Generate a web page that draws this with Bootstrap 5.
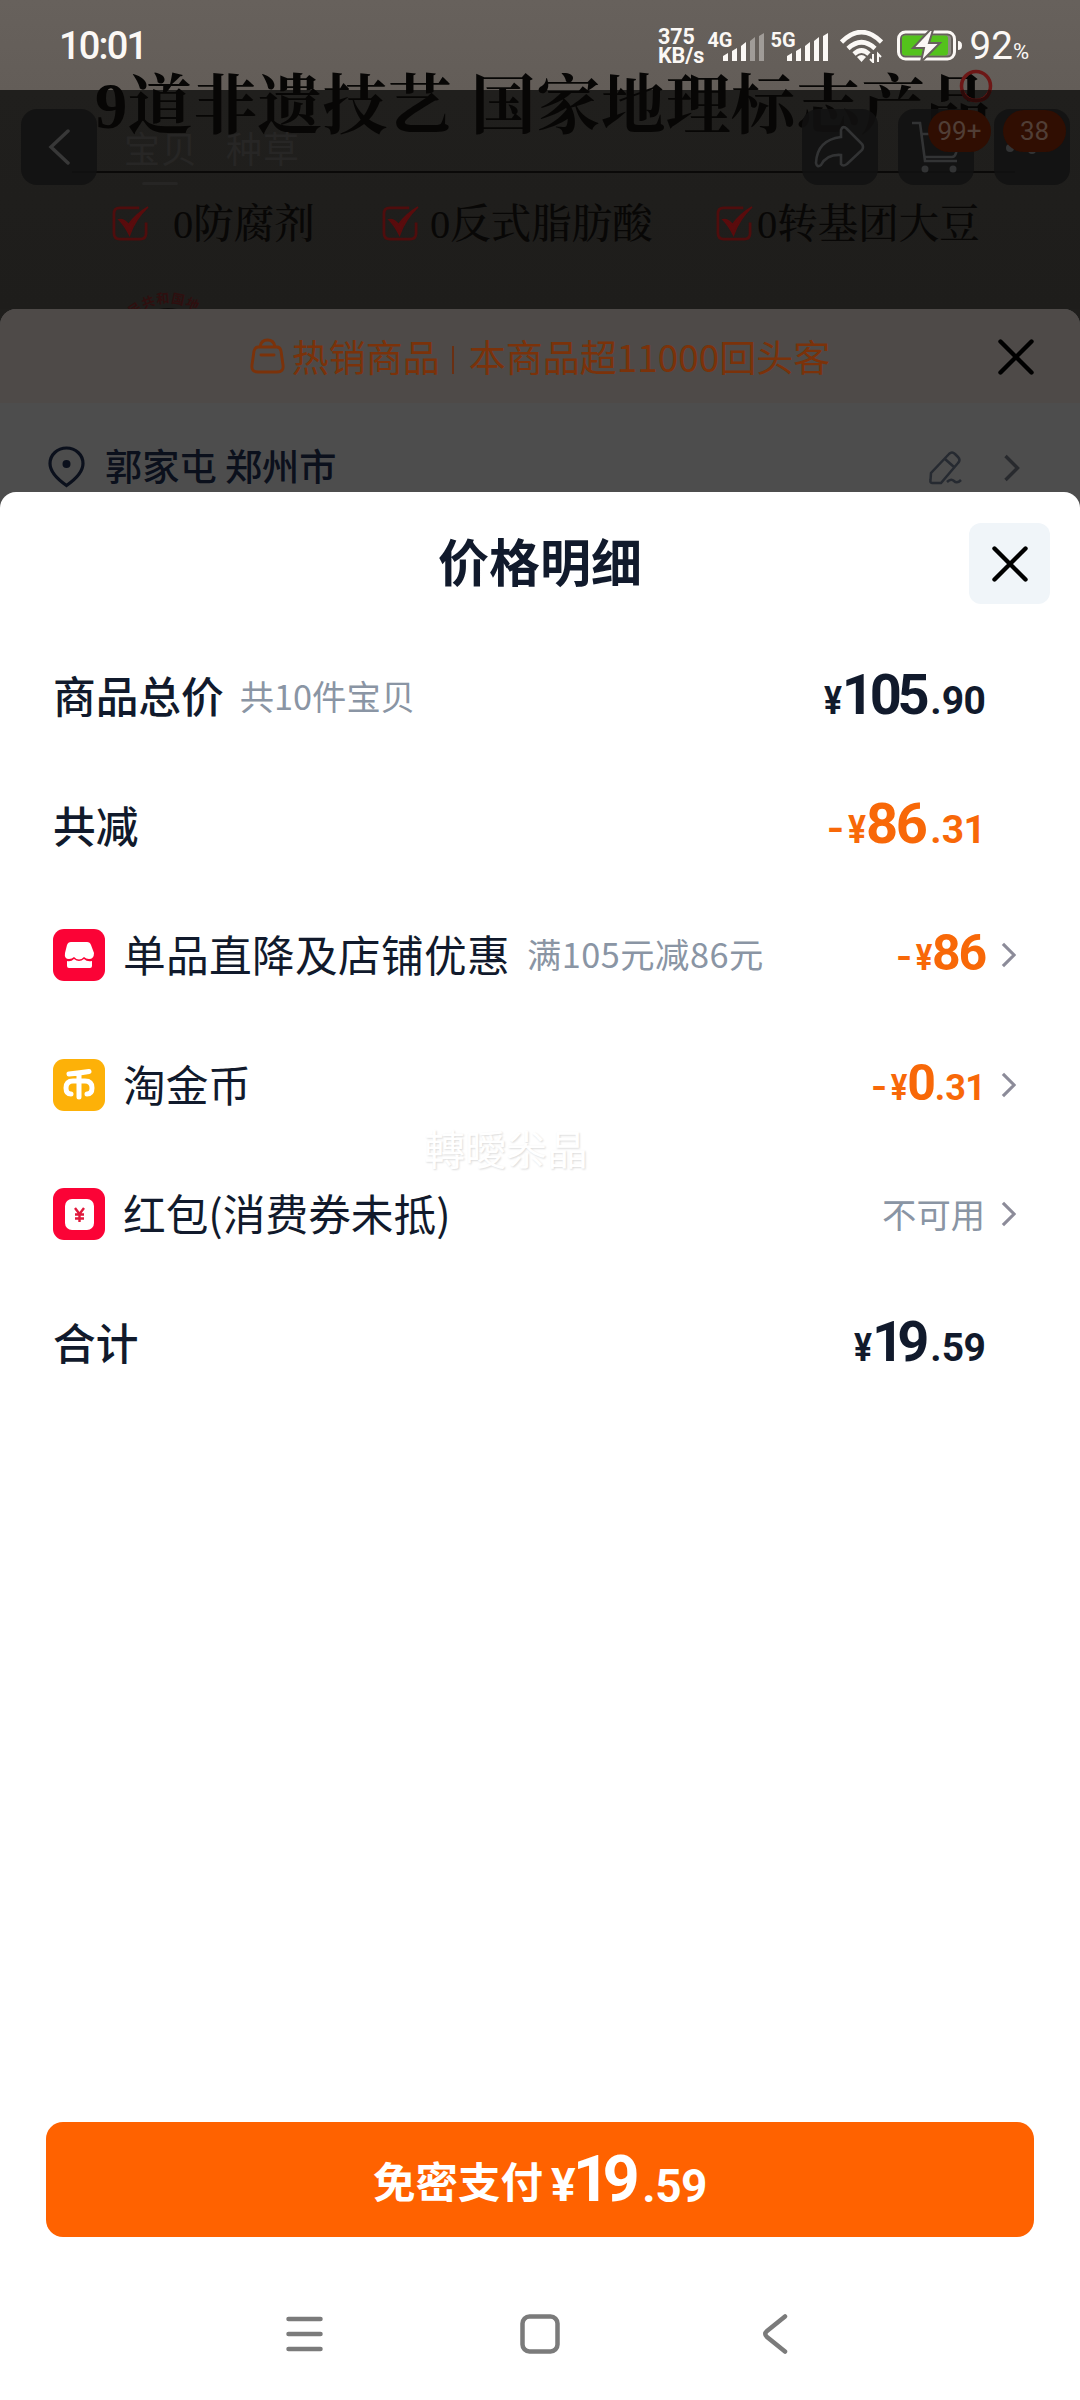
<!DOCTYPE html>
<html lang="zh-CN">
<head>
<meta charset="utf-8">
<meta name="viewport" content="width=device-width, initial-scale=1">
<title>价格明细</title>
<link href="https://cdn.jsdelivr.net/npm/bootstrap@5.3.0/dist/css/bootstrap.min.css" rel="stylesheet">
<style>
  body { width: 1080px; height: 2400px; margin: 0; overflow: hidden; background: #1f1e1c; font-family: "Noto Sans CJK SC", sans-serif; line-height: 1; color: #111a2c; }
  svg { display: block; flex: none; }
  .phone { white-space: nowrap; }
  .latin { font-family: Roboto, sans-serif; }

  /* dimmed product page */
  .promo { height: 309px; background: linear-gradient(#67615c 0, #635d58 90px, #201f1d 90px, #1e1d1b 100%); }
  .statusbar { height: 90px; padding: 2px 51px 0 59px; color: #fbf8f5; z-index: 5; }
  .clock { font-size: 38px; font-weight: 500; letter-spacing: -1.8px; }
  .netspeed { font-size: 21.5px; font-weight: 700; line-height: 19px; margin-right: 3px; }
  .gen { font-size: 20px; font-weight: 700; height: 32px; }
  .headline { left: 95px; top: 75px; font-family: "Liberation Serif", "Noto Serif CJK SC", "Noto Sans CJK SC", serif; font-size: 64.5px; font-weight: 700; color: #070605; letter-spacing: .45px; word-spacing: 2px; }
  .rule { height: 2px; background: #0a0908; margin: 0 65px 0 72px; }
  .claims { font-family: "Liberation Serif", "Noto Serif CJK SC", "Noto Sans CJK SC", serif; font-size: 40.5px; font-weight: 500; color: #080706; padding-left: 112px; margin-top: 30px; }
  .claims span { position: relative; top: 2px; }
  .toolbar { left: 21px; right: 10px; top: 109px; }
  .tool { width: 76px; height: 76px; border-radius: 16px; background: rgba(17,18,18,.86); }
  .tool-badge { top: 1px; height: 42px; width: 63px; border-radius: 21px; background: #300e02; color: #503e36; font-size: 26px; }
  .ghost-tab { color: #272625; font-size: 36px; letter-spacing: 1px; }

  /* middle sheet */
  .sheet-back { height: 211px; border-radius: 16px 16px 0 0; background: #4d4d4d; }
  .hotbar { height: 94px; border-radius: 16px 16px 0 0; background: #4e4a48; color: #7b320a; font-size: 37px; }
  .addr { height: 130px; padding: 0 48px; font-size: 37.2px; font-weight: 500; color: #0b101c; }

  /* price sheet */
  .sheet { height: 1908px; margin-top: -28px; border-radius: 16px 16px 0 0; background: #fff; }
  .sheet-head { height: 140px; padding-bottom: 4px; }
  .sheet-title { font-size: 51px; font-weight: 700; }
  .x-btn { right: 30px; top: 31px; width: 81px; height: 81px; border-radius: 12px; background: #f0f5f9; }
  .line { height: 129.4px; padding: 0 64px 0 53px; font-size: 42.7px; }
  .caption-txt, .hint { position: relative; top: -2px; }
  .semi { font-weight: 500; }
  .hint { font-size: 34.3px; color: #8a95a4; }
  .tail { width: 31px; }
  .amt { font-family: Roboto, sans-serif; font-weight: 700; font-size: 39px; padding-bottom: 4px; }
  .amt .big { font-size: 56px; letter-spacing: -4.3px; }
  .amt .one { letter-spacing: -7px; margin-right: 3px; }
  .amt .yen { margin-right: 0; display: inline-block; transform: scaleX(.86); transform-origin: right; }
  .amt .dec { letter-spacing: -.8px; }
  .amt .dot { margin: 0 1px 0 5px; }
  .amt .neg { margin-right: 2px; display: inline-block; transform: translateY(-1px) scaleX(1.15); }
  .amt-sm, .amt-sm .yen { font-size: 36px; }
  .amt-sm .big { font-size: 50px; letter-spacing: -2.2px; }
  .orange { color: #f86808; }
  .ghost-mark { left: 424px; top: 635px; font-size: 41px; color: #fff; text-shadow: 1px 1px 2px #dcdcdc; }
  .pay { margin: 0 46px; height: 115px; border-radius: 17px; background: #ff6200; color: #fff; font-size: 42.5px; font-weight: 700; border: 0; }
  .pay-amt { font-size: 46px; margin-left: 8px; }
  .pay-amt .whole { font-size: 65px; letter-spacing: -7.5px; }
  .navkeys { height: 163px; padding: 31px 0 0 286px; }
</style>
</head>
<body>
<svg width="0" height="0" class="position-absolute">
  <symbol id="tick" viewBox="0 0 38 38"><path d="M28 3H8Q2 3 2 9V29Q2 35 8 35H29Q35 35 35 29V18" fill="none" stroke="#4f0d0d" stroke-width="2.800"/><path d="M7 15Q12 14 17 20Q25 9 37 2Q24 14 18 31Q13 21 7 15Z" fill="#5a0c0d" stroke="#5a0c0d" stroke-width="1.500"/></symbol>
  <symbol id="chev" viewBox="0 0 16 28"><path d="M2 2L14 14L2 26" fill="none" stroke="currentColor" stroke-width="3.400"/></symbol>
  <symbol id="cross" viewBox="0 0 36 36"><path d="M2.500 2.500L33.500 33.500M33.500 2.500L2.500 33.500" stroke="#000" stroke-width="4.400" stroke-linecap="round"/></symbol>
</svg>
<div class="phone position-relative">

  <div class="promo position-relative overflow-hidden">
    <div class="statusbar latin d-flex align-items-center position-relative">
      <span class="clock">10:01</span>
      <div class="netspeed ms-auto"><div>375</div><div>KB/s</div></div>
      <span class="gen">4G</span>
      <svg width="43" height="28" viewBox="0 0 43 28" style="margin:2px 5px 0 -10px" fill="#fbf8f5"><path d="M1 23l5-3v8H1zM10 18l5-3v13h-5zM19 13l5-4v19h-5z"/><path d="M28 8l5-4v24h-5zM37 3l5-3v28h-5z" opacity=".4"/></svg>
      <span class="gen">5G</span>
      <svg width="43" height="28" viewBox="0 0 43 28" style="margin:2px 11px 0 -10px" fill="#fbf8f5"><path d="M1 23l5-3v8H1zM10 18l5-3v13h-5zM19 13l5-4v19h-5zM28 8l5-4v24h-5zM37 3l5-3v28h-5z"/></svg>
      <svg width="43" height="33" viewBox="0 0 43 33" style="margin-right:14px" fill="none" stroke="#fbf8f5"><path d="M1.500 12Q21.500-8 41.500 12M8 18.500Q21.500 6 35 18.500M14 24Q21.500 17 29 24" stroke-width="4.600"/><path d="M17 27Q21.500 23 26 27L21.500 32Z" fill="#fbf8f5" stroke="none"/><path d="M33 24v8l-3-3M38 32v-8l3 3" stroke-width="2"/></svg>
      <svg width="66" height="32" viewBox="0 0 66 32" style="margin-right:7px"><rect x="1.500" y="2" width="56" height="27" rx="7" fill="none" stroke="#fbf8f5" stroke-width="3"/><rect x="5" y="5.500" width="49" height="20" rx="3" fill="#8f8b86"/><rect x="5" y="5.500" width="46" height="20" rx="3" fill="#54c21c"/><path d="M33 0L16 18H27L24 32L43 13H32L36 0Z" fill="#fbf8f5" stroke="#67615c" stroke-width="2"/><path d="M61 11q4 0 4 4.500t-4 4.500z" fill="#fbf8f5"/></svg>
      <span style="font-size:38.500px">92</span><span style="font-size:22px;margin-top:12px">%</span>
    </div>
    <div class="headline position-absolute">9道非遗技艺 国家地理标志产品</div>
    <svg class="position-absolute" style="left:959px;top:69px" width="34" height="34"><circle cx="17" cy="17" r="14.500" fill="none" stroke="#6d1716" stroke-width="3.500"/><path d="M3 21Q5 31.500 17 31.500Q29 31.500 31 21" fill="none" stroke="#2c0a09" stroke-width="3.500"/></svg>
    <div style="height:81px"></div>
    <div class="rule"></div>
    <div class="claims d-flex align-items-center">
      <svg width="37" height="37" style="margin-right:24px"><use href="#tick"/></svg><span style="width:209px">0防腐剂</span>
      <svg width="37" height="37" style="margin-right:11px"><use href="#tick"/></svg><span style="width:286px">0反式脂肪酸</span>
      <svg width="37" height="37" style="margin-right:4px"><use href="#tick"/></svg><span>0转基团大豆</span>
    </div>
    <svg class="position-absolute" style="left:111px;top:287px" width="115" height="22"><path id="arc" d="M12 38Q57-6 102 38" fill="none"/><text font-size="13" font-weight="700" fill="#2f0f0f" letter-spacing="1"><textPath href="#arc" startOffset="12">民共和国地</textPath></text><path d="M42 24q15-6 30 0z" fill="#0e0c0b"/></svg>
    <div class="toolbar position-absolute d-flex align-items-center">
      <div class="tool d-flex align-items-center justify-content-center"><svg width="22" height="36" viewBox="0 0 22 36"><path d="M20 2L3 18L20 34" fill="none" stroke="#383838" stroke-width="3.500" stroke-linecap="round"/></svg></div>
      <div class="ghost-tab" style="margin-left:27px">宝贝</div><div class="ghost-tab" style="margin-left:28px">种草</div>
      <div class="tool ms-auto d-flex align-items-center justify-content-center"><svg width="52" height="44" viewBox="0 0 52 44"><path d="M28 3Q30 1 33 4L48 19Q50 22 48 25L33 39Q29 42 27 39V30Q13 29 7 40Q3 43 2 38Q3 15 27 12V5Z" fill="none" stroke="#323334" stroke-width="2.600"/></svg></div>
      <div class="tool position-relative d-flex align-items-center justify-content-center" style="margin-left:20px"><svg width="50" height="54" viewBox="0 0 50 54"><path d="M1 3h8l5 38h32M11 14h37l-3 19q-1 4-4 4H14" fill="none" stroke="#323334" stroke-width="2.600"/><circle cx="14" cy="49" r="3.500" fill="#323334"/><circle cx="42" cy="49" r="3.500" fill="#323334"/></svg><span class="tool-badge latin position-absolute d-flex align-items-center justify-content-center" style="left:30px">99+</span></div>
      <div class="tool position-relative" style="margin-left:20px"><svg width="76" height="76"><circle cx="16" cy="39" r="4" fill="#323334"/><circle cx="38" cy="41" r="4" fill="#323334"/></svg><span class="tool-badge latin position-absolute d-flex align-items-center justify-content-center" style="left:9px">38</span></div>
    </div>
    <svg class="position-absolute" style="left:142px;top:182px" width="36" height="4"><rect width="36" height="3" rx="1.500" fill="#262524"/></svg>
  </div>

  <div class="sheet-back">
    <div class="hotbar position-relative d-flex align-items-center justify-content-center">
      <svg width="35" height="36" viewBox="0 0 35 36" fill="none" stroke="#7b320a" stroke-width="2.900" style="margin-right:7px"><path d="M8 9H27Q30 9 31 13L33 27Q34 34 27 34H8Q1 34 2 27L4 13Q5 9 8 9ZM10 9Q11 2 17.500 2T25 9M11 17H24" stroke-linecap="round"/></svg>
      <span>热销商品</span><svg width="2" height="28" style="margin:8px 15px 0 12px"><path d="M1 0V28" stroke="#6a2f12" stroke-width="2"/></svg><span>本商品超11000回头客</span>
      <svg class="position-absolute" style="left:998px;top:30px" width="36" height="36"><use href="#cross"/></svg>
    </div>
    <div class="addr d-flex align-items-center">
      <svg width="37" height="42" viewBox="0 0 37 42" style="margin:-3px 20px 0 0"><path d="M18.500 39.500Q2 28 2 17.500A16.500 15.500 0 0 1 35 17.500Q35 28 18.500 39.500Z" fill="none" stroke="#0b101c" stroke-width="3.200"/><circle cx="18.500" cy="18" r="4" fill="#0b101c"/></svg>
      <span class="caption-txt">郭家屯 郑州市</span>
      <svg width="33" height="34" viewBox="0 0 33 34" class="ms-auto" fill="none" stroke="#262a31" stroke-width="2.500"><path d="M20 3Q23 0 26 3L29 6Q32 9 29 12L12 32L3 32Q1 32 1.500 29L2 22ZM16 8L25 16"/><path d="M18 31q4-4 7-1t7-1"/></svg>
      <svg width="17" height="28" style="margin:0 12px 0 41px;color:#282a2e"><use href="#chev"/></svg>
    </div>
  </div>

  <div class="sheet position-relative d-flex flex-column">
    <div class="sheet-head d-flex align-items-center justify-content-center">
      <span class="sheet-title">价格明细</span>
      <button class="x-btn btn p-0 position-absolute d-flex align-items-center justify-content-center"><svg width="36" height="36"><use href="#cross"/></svg></button>
    </div>

    <div class="line d-flex align-items-center">
      <span class="caption-txt semi">商品总价</span><span class="hint" style="margin-left:16px">共10件宝贝</span>
      <span class="amt ms-auto"><span class="yen">¥</span><span class="big">105</span><span class="dec"><span class="dot">.</span>90</span></span><span class="tail"></span>
    </div>
    <div class="line d-flex align-items-center">
      <span class="caption-txt semi">共减</span>
      <span class="amt orange ms-auto"><span class="neg">-</span><span class="yen">¥</span><span class="big" style="letter-spacing:-2.5px">86</span><span class="dec"><span class="dot">.</span>31</span></span><span class="tail"></span>
    </div>
    <div class="line d-flex align-items-center">
      <svg width="52" height="52" viewBox="0 0 52 52" style="margin-right:18px"><rect width="52" height="52" rx="11" fill="#fb0336"/><path d="M18 13H34Q37 13 38 16L41 24Q41 30 36 30Q33 30 31 28Q26 33 21 28Q19 30 16 30Q11 30 12 24L14 16Q15 13 18 13Z" fill="#fff"/><path d="M14 32q4 1 7-2q5 4 10 0q3 3 8 2v5q0 2-2 2H16q-2 0-2-2z" fill="#fff"/></svg>
      <span class="caption-txt" style="letter-spacing:.3px">单品直降及店铺优惠</span><span class="hint" style="margin-left:17px;letter-spacing:.5px">满105元减86元</span>
      <span class="amt amt-sm orange ms-auto"><span class="neg">-</span><span class="yen">¥</span><span class="big">86</span></span>
      <span class="tail d-flex justify-content-end" style="color:#8c8b99"><svg width="15" height="26"><use href="#chev"/></svg></span>
    </div>
    <div class="line d-flex align-items-center">
      <svg width="52" height="52" viewBox="0 0 52 52" style="margin-right:18px"><rect width="52" height="52" rx="11" fill="#fdb108"/><path d="M16 15Q27 14 36 12.500M26 14V38M18 35Q13 35 13 29Q13 22 20 22H32Q39 22 39 29Q39 35 34 35" fill="none" stroke="#fff" stroke-width="5" stroke-linecap="round"/></svg>
      <span class="caption-txt">淘金币</span>
      <span class="amt amt-sm orange ms-auto"><span class="neg">-</span><span class="yen">¥</span><span class="big">0</span><span class="dec"><span class="dot" style="margin-left:1px">.</span>31</span></span>
      <span class="tail d-flex justify-content-end" style="color:#8c8b99"><svg width="15" height="26"><use href="#chev"/></svg></span>
    </div>
    <div class="line d-flex align-items-center">
      <svg width="52" height="52" viewBox="0 0 52 52" style="margin-right:18px"><rect width="52" height="52" rx="11" fill="#fb0336"/><rect x="12" y="11" width="29" height="31" rx="7" fill="#fff"/><path d="M22 20L26.500 26L31 20M26.500 26V34M22 26.500H31M22 30.500H31" fill="none" stroke="#e0193c" stroke-width="2.400"/></svg>
      <span class="caption-txt">红包(消费券未抵)</span>
      <span class="hint ms-auto" style="top:-1px">不可用</span>
      <span class="tail d-flex justify-content-end" style="color:#8c8b99"><svg width="15" height="26"><use href="#chev"/></svg></span>
    </div>
    <div class="line d-flex align-items-center">
      <span class="caption-txt semi">合计</span>
      <span class="amt ms-auto"><span class="yen">¥</span><span class="big one">19</span><span class="dec"><span class="dot">.</span>59</span></span><span class="tail"></span>
    </div>
    <div class="ghost-mark position-absolute">轉曖尜晶</div>

    <button class="pay btn mt-auto p-0 d-flex align-items-center justify-content-center">
      <span>免密支付</span>
      <span class="pay-amt latin d-flex align-items-baseline"><span style="margin-right:-3px">¥</span><span class="whole">19</span><span style="margin-left:10px;letter-spacing:-.5px;position:relative;top:1px">.59</span></span>
    </button>
    <div class="navkeys d-flex align-items-center">
      <svg width="37" height="36" viewBox="0 0 37 36"><path d="M2.500 3H34.500M2.500 18H34.500M2.500 33H34.500" stroke="#7b7b7b" stroke-width="4.500" stroke-linecap="round"/></svg>
      <svg width="40" height="40" viewBox="0 0 40 40" style="margin-left:197px"><rect x="2.500" y="2.500" width="35" height="35" rx="7" fill="none" stroke="#7b7b7b" stroke-width="4.500"/></svg>
      <svg width="27" height="40" viewBox="0 0 27 40" style="margin-left:202px"><path d="M23 2.500L5 17Q1.500 20 5 23L23 37.500" fill="none" stroke="#7b7b7b" stroke-width="4.500" stroke-linecap="round"/></svg>
    </div>
  </div>
</div>
<script src="https://cdn.jsdelivr.net/npm/bootstrap@5.3.0/dist/js/bootstrap.bundle.min.js"></script>
</body>
</html>
